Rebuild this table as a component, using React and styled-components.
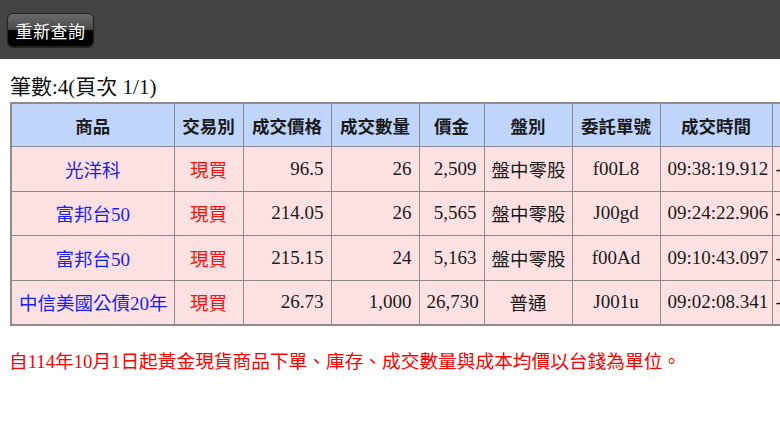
import React from "react";
import styled, { createGlobalStyle } from "styled-components";

const Global = createGlobalStyle`
  html, body { margin: 0; padding: 0; background: #fff; overflow: hidden; }
  body { font-family: "Liberation Serif", "Noto Sans CJK TC", serif; width: 780px; }
`;

const TopBar = styled.div`
  height: 59px;
  background: #444444;
  display: flex;
  align-items: center;
  padding-left: 7px;
`;

const QueryButton = styled.button`
  height: 34px;
  width: 87px;
  margin-top: 1px;
  border: 1px solid #222;
  border-radius: 6px;
  background: linear-gradient(to bottom, #6a6a6a 0%, #4a4a4a 48%, #050505 52%, #000 100%);
  box-shadow: 0 1px 1px rgba(0,0,0,0.5);
  color: #fff;
  font-family: "Noto Sans CJK TC", sans-serif;
  font-size: 17px;
  padding: 0;
  letter-spacing: 0.5px;
`;

const Content = styled.div`
  padding: 0 0 0 10px;
`;

const Count = styled.div`
  font-size: 21px;
  line-height: 24px;
  color: #111;
  margin-top: 14px;
  margin-bottom: 3px;
  font-family: "Liberation Serif", "Noto Sans CJK TC", serif;
  & > span { font-family: "Noto Sans CJK TC", sans-serif; }
`;

const Table = styled.table`
  border-collapse: collapse;
  table-layout: fixed;
  width: ${(p) => p.$width}px;
  border: 2px solid #8c8c8c;
  font-size: 19px;
`;

const Th = styled.th`
  background: #bfd5fb;
  border: 1px solid #8c8c8c;
  height: 42px;
  padding: 0;
  font-family: "Noto Sans CJK TC", sans-serif;
  font-weight: 700;
  font-size: 17.5px;
  color: #1a1a1a;
  text-align: center;
  white-space: nowrap;
  overflow: hidden;
`;

const Td = styled.td`
  background: #fde1e2;
  border: 1px solid #8c8c8c;
  height: 43.5px;
  padding: 0 ${(p) => (p.$tight ? "3px" : "7px")};
  text-align: ${(p) => p.$align || "center"};
  color: ${(p) => (p.$tone === "blue" ? "#1c1cf5" : p.$tone === "red" ? "#ff1010" : "#1a1a1a")};
  font-family: ${(p) => (p.$cjk ? '"Noto Sans CJK TC", sans-serif' : '"Liberation Serif", "Noto Sans CJK TC", serif')};
  font-size: ${(p) => (p.$cjk ? "18.5px" : "19px")};
  white-space: nowrap;
  overflow: hidden;
`;

const Product = styled.span`
  font-family: "Noto Sans CJK TC", sans-serif;
  font-size: 18.5px;
  & > b { font-weight: 400; font-family: "Liberation Serif", serif; font-size: 19px; }
`;

const Notice = styled.div`
  margin-top: 24px;
  margin-left: -1px;
  color: #ff0000;
  font-size: 18.7px;
  line-height: 24px;
  white-space: nowrap;
  font-family: "Liberation Serif", "Noto Sans CJK TC", sans-serif;
`;

const widths = [163, 69, 88, 88, 65, 88, 88, 112, 90];
const heads = ["商品", "交易別", "成交價格", "成交數量", "價金", "盤別", "委託單號", "成交時間", "手續費"];

const rows = [
  { name: "光洋科", num: "", price: "96.5", qty: "26", amt: "2,509", kind: "盤中零股", id: "f00L8", time: "09:38:19.912" },
  { name: "富邦台", num: "50", price: "214.05", qty: "26", amt: "5,565", kind: "盤中零股", id: "J00gd", time: "09:24:22.906" },
  { name: "富邦台", num: "50", price: "215.15", qty: "24", amt: "5,163", kind: "盤中零股", id: "f00Ad", time: "09:10:43.097" },
  { name: "中信美國公債", num: "20", tail: "年", price: "26.73", qty: "1,000", amt: "26,730", kind: "普通", id: "J001u", time: "09:02:08.341" },
];

export default function App() {
  const total = widths.reduce((a, b) => a + b, 0);
  return (
    <>
      <Global />
      <TopBar>
        <QueryButton>重新查詢</QueryButton>
      </TopBar>
      <Content>
        <Count><span>筆數</span>:4(<span>頁次</span> 1/1)</Count>
        <Table $width={total}>
          <colgroup>
            {widths.map((w, i) => (
              <col key={i} style={{ width: w }} />
            ))}
          </colgroup>
          <thead>
            <tr>
              {heads.map((h) => (
                <Th key={h}>{h}</Th>
              ))}
            </tr>
          </thead>
          <tbody>
            {rows.map((r, i) => (
              <tr key={i}>
                <Td $tone="blue">
                  <Product>
                    {r.name}
                    <b>{r.num}</b>
                    {r.tail}
                  </Product>
                </Td>
                <Td $tone="red" $cjk>現買</Td>
                <Td $align="right">{r.price}</Td>
                <Td $align="right">{r.qty}</Td>
                <Td $align="right">{r.amt}</Td>
                <Td $cjk>{r.kind}</Td>
                <Td>{r.id}</Td>
                <Td>{r.time}</Td>
                <Td $align="left" $tight>-</Td>
              </tr>
            ))}
          </tbody>
        </Table>
        <Notice>自114年10月1日起黃金現貨商品下單、庫存、成交數量與成本均價以台錢為單位。</Notice>
      </Content>
    </>
  );
}
